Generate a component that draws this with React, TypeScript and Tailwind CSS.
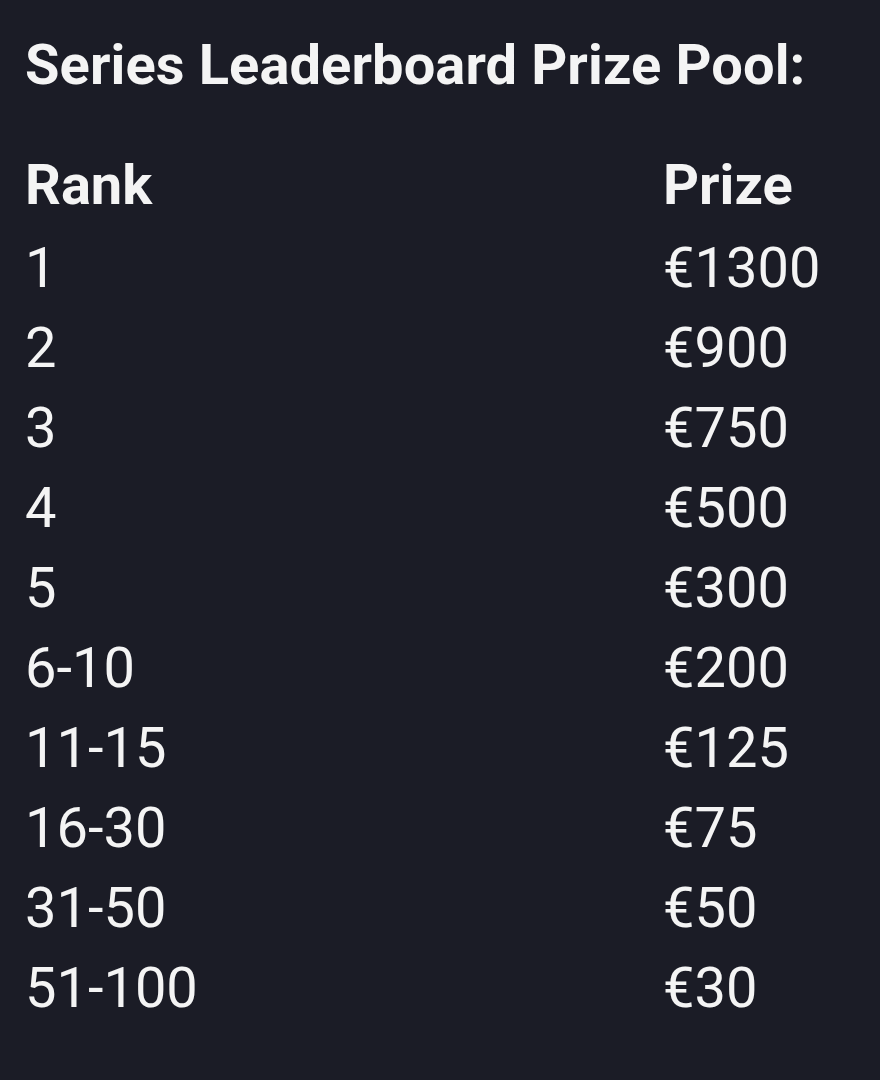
import * as React from "react";

const rows: [string, string][] = [
  ["1", "€1300"],
  ["2", "€900"],
  ["3", "€750"],
  ["4", "€500"],
  ["5", "€300"],
  ["6-10", "€200"],
  ["11-15", "€125"],
  ["16-30", "€75"],
  ["31-50", "€50"],
  ["51-100", "€30"],
];

export default function App() {
  return (
    <div
      className="w-[880px] h-[1080px] bg-[#1b1c26] text-[#f4f4f4] pl-[25px] pt-[25px]"
      style={{ fontFamily: "Roboto, 'Liberation Sans', sans-serif" }}
    >
      <h2 className="text-[56px] leading-[80px] font-bold tracking-[0.1px]">
        Series Leaderboard Prize Pool:
      </h2>
      <div className="mt-[40px]">
        <div className="grid grid-cols-[638px_1fr] text-[56px] leading-[80px] font-bold">
          <span>Rank</span>
          <span>Prize</span>
        </div>
        <div className="mt-[3px]">
          {rows.map(([rank, prize]) => (
            <div
              key={rank}
              className="grid grid-cols-[638px_1fr] text-[56px] leading-[80px]"
            >
              <span>{rank}</span>
              <span>{prize}</span>
            </div>
          ))}
        </div>
      </div>
    </div>
  );
}
